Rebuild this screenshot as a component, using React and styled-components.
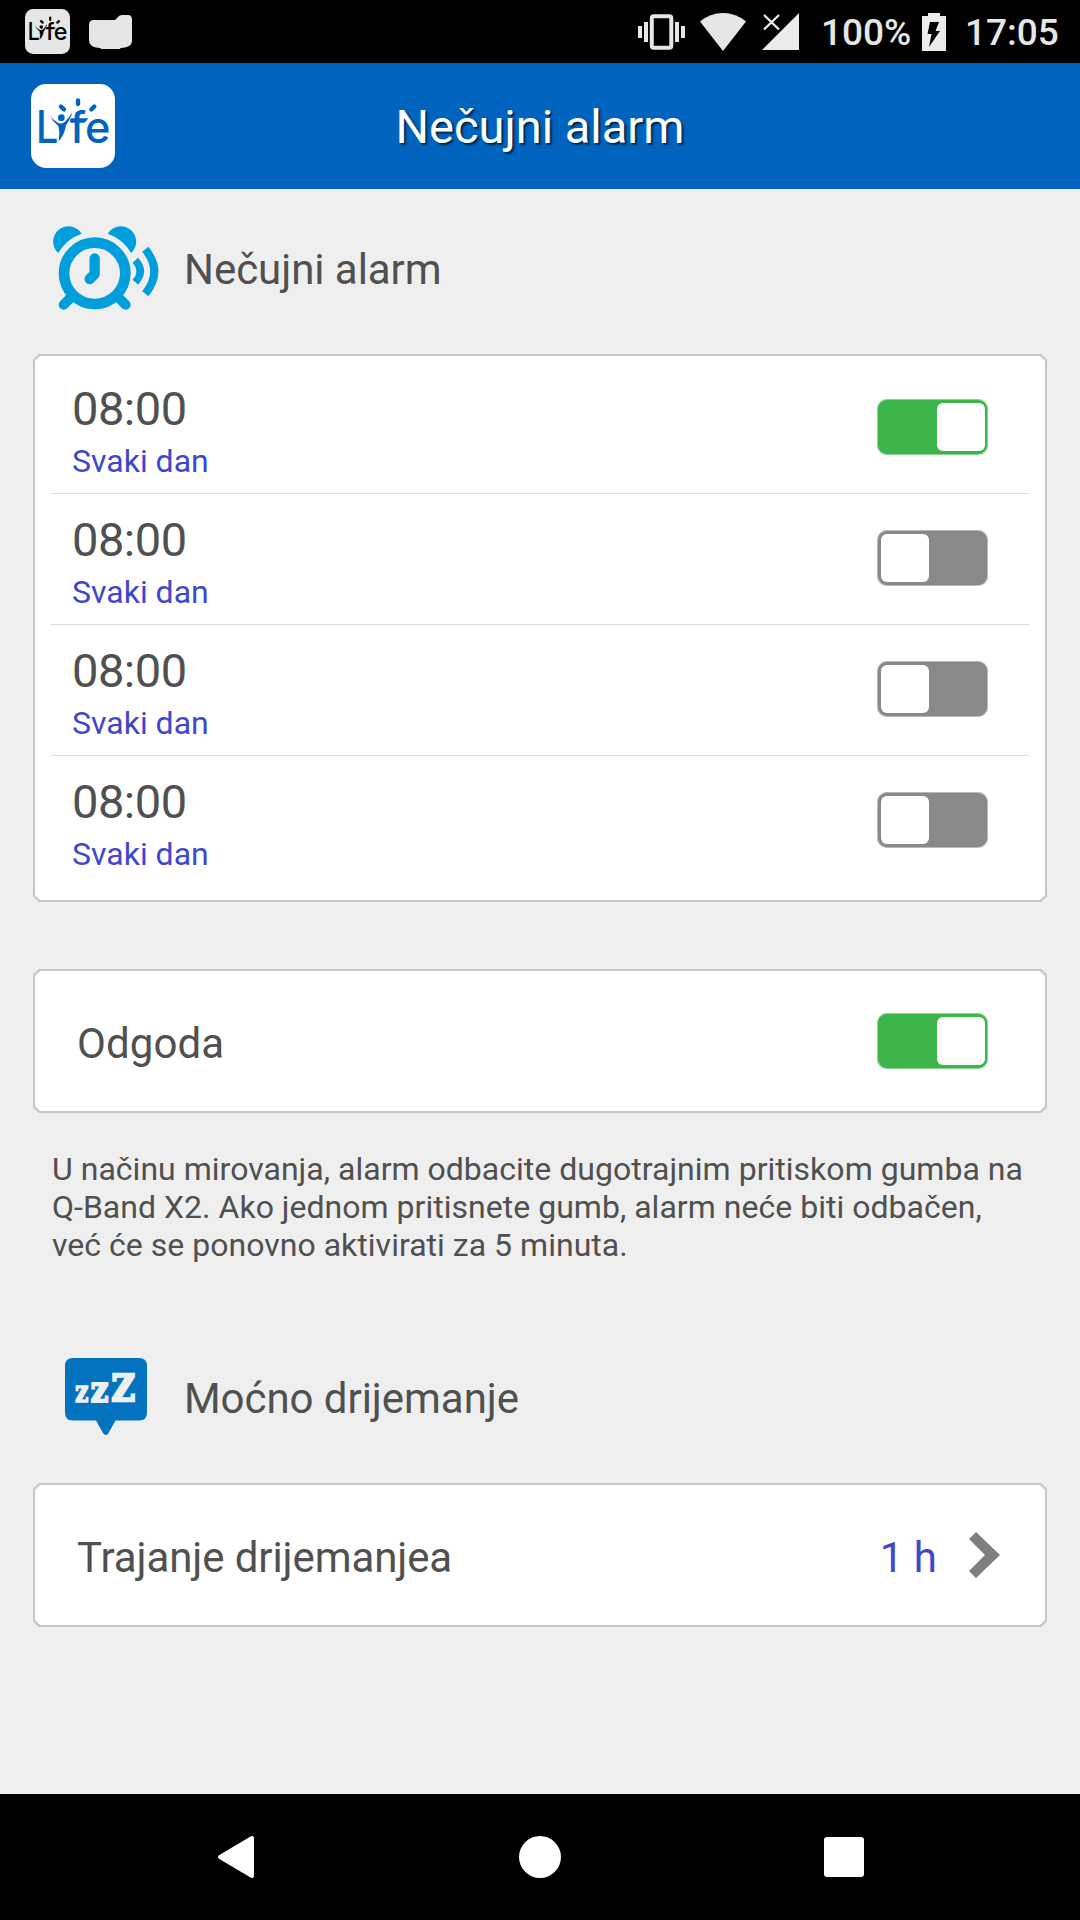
import React, { useState } from 'react';
import styled, { createGlobalStyle } from 'styled-components';

const GlobalStyle = createGlobalStyle`
  * {
    box-sizing: border-box;
  }
  body {
    margin: 0;
    background: #efefef;
    font-family: Roboto, "Noto Sans", sans-serif;
    color: #505050;
  }
`;

const Screen = styled.div`
  width: 1080px;
  height: 1920px;
  display: flex;
  flex-direction: column;
  overflow: hidden;
`;

const StatusBar = styled.div`
  height: 63px;
  padding: 0 21px 0 25px;
  display: flex;
  align-items: center;
  background: #000;
  color: #e6e6e6;
`;

const StatusIcons = styled.div`
  display: flex;
  align-items: center;
  gap: 19px;
  flex: 1;
`;

const StatusText = styled.span`
  font-size: 37px;
  font-weight: 500;
  line-height: 44px;
  padding-top: 3px;
  width: ${(p) => p.$width}px;
  margin-left: ${(p) => p.$gap || 0}px;
  white-space: nowrap;
`;

const StatusSvg = styled.svg`
  display: block;
  flex: none;
  margin-left: ${(p) => p.$gap || 0}px;
`;

const Header = styled.header`
  height: 126px;
  padding: 0 31px;
  display: grid;
  grid-template-columns: 84px 1fr 84px;
  align-items: center;
  background: #0063bd;
`;

const Title = styled.h1`
  margin: 0;
  padding-top: 1px;
  font-size: 47px;
  font-weight: 400;
  line-height: 56px;
  text-align: center;
  color: #fff;
  text-shadow: 2px 2px 2px rgba(0, 0, 0, 0.6);
`;

const Content = styled.main`
  flex: 1;
  padding: 0 33px;
`;

const Section = styled.div`
  display: flex;
  align-items: flex-start;
  height: ${(p) => p.$height}px;
  padding-top: ${(p) => p.$top}px;
`;

const SectionIcon = styled.div`
  width: 151px;
  padding-left: ${(p) => p.$left}px;
  svg {
    display: block;
  }
`;

const SectionTitle = styled.h2`
  margin: ${(p) => p.$top}px 0 0;
  font-size: 42px;
  font-weight: 400;
  line-height: 50px;
  letter-spacing: -0.05px;
`;

const Card = styled.div`
  border: 2px solid #c8c8c8;
  border-radius: 6px;
  corner-shape: bevel;
  background: #fff;
`;

const AlarmCard = styled(Card)`
  height: 548px;
  padding: 7px 16px 0;
`;

const AlarmRow = styled.div`
  height: 131px;
  padding: 18px 41px 0 21px;
  display: flex;
  align-items: flex-start;
  justify-content: space-between;
  border-bottom: 1px solid ${(p) => (p.$last ? 'transparent' : '#dcdcdc')};

  button {
    margin-top: 18px;
  }
`;

const Time = styled.div`
  font-size: 47px;
  line-height: 56px;
  letter-spacing: -0.5px;
`;

const Repeat = styled.div`
  margin-top: 5px;
  font-size: 32px;
  line-height: 38px;
  color: #3f48cc;
`;

const OptionCard = styled(Card)`
  height: 144px;
  margin-top: ${(p) => p.$top || 0}px;
  padding: 0 ${(p) => p.$right}px 0 42px;
  display: flex;
  align-items: center;
`;

const OptionLabel = styled.span`
  flex: 1;
  padding-top: 5px;
  font-size: 42px;
  line-height: 50px;
  letter-spacing: ${(p) => p.$spacing || 0}px;
`;

const OptionValue = styled(OptionLabel)`
  flex: none;
  margin-right: 32px;
  color: #3f48cc;
`;

const Track = styled.button`
  width: 111px;
  height: 56px;
  margin: 0;
  padding: 4px 3px 4px 4px;
  border: none;
  border-radius: 10px;
  display: flex;
  justify-content: ${(p) => (p.$on ? 'flex-end' : 'flex-start')};
  background: ${(p) => (p.$on ? '#3bb54a' : '#898989')};
  box-shadow: inset 0 0 0 1px rgba(255, 255, 255, 0.4);
`;

const Knob = styled.span`
  width: 48px;
  height: 48px;
  border-radius: 6px;
  background: #fff;
`;

const Note = styled.p`
  margin: 37px 0 0;
  padding-left: 19px;
  font-size: 32px;
  line-height: 38px;
  letter-spacing: 0.02px;
  white-space: nowrap;
`;

const NavBar = styled.nav`
  height: 126px;
  padding: 0 216px;
  display: flex;
  align-items: center;
  justify-content: space-between;
  background: #000;
`;

function LyfeLogo({ size, bg, ink }) {
  return (
    <svg width={size} height={size} viewBox="0 0 252 252">
      <rect width="252" height="252" rx="46" fill={bg} />
      <g fill={ink} fontFamily="Inter, sans-serif" fontWeight="500">
        <text x="15" y="176" fontSize="134" textLength="67" lengthAdjust="spacingAndGlyphs">L</text>
        <text x="116" y="176" fontSize="130" textLength="122" lengthAdjust="spacingAndGlyphs">fe</text>
      </g>
      <path d="M118 103 H172 L164 113 H118 Z" fill={ink} />
      <path
        d="M55 90 Q64 106 82 116 Q91 120 100 114 Q112 104 121 87 L124 90 Q116 112 106 124 Q102 154 81 175 Q87 146 81 126 Q62 112 55 90 Z"
        fill={ink}
        stroke={bg}
        strokeWidth="2"
      />
      <circle cx="91" cy="101" r="10" fill={ink} />
      <g stroke={ink} strokeWidth="13" strokeLinecap="round">
        <path d="M90 68 L99 76" />
        <path d="M141 49 V60" />
        <path d="M181 76 L190 68" />
      </g>
    </svg>
  );
}

function AlarmIcon() {
  return (
    <svg width="106" height="84" viewBox="0 0 318 252" fill="none" stroke="#009fdb">
      <circle cx="125" cy="142" r="92" strokeWidth="32" />
      <path d="M125 97 V144 L110 159" strokeWidth="31" strokeLinecap="round" strokeLinejoin="round" />
      <path d="M52 216 L32 236 M198 216 L218 236" strokeWidth="30" strokeLinecap="round" />
      <path d="M16 81 A46 46 0 1 1 86 23 A125 125 0 0 0 16 81 Z" fill="#009fdb" stroke="none" />
      <path d="M234 81 A46 46 0 1 0 164 23 A125 125 0 0 1 234 81 Z" fill="#009fdb" stroke="none" />
      <path d="M247 103 Q277 136 247 169" strokeWidth="22" />
      <path d="M277 70 Q331 137 277 203" strokeWidth="24" />
    </svg>
  );
}

function NapIcon() {
  return (
    <svg width="82" height="78" viewBox="0 0 82 78">
      <path
        d="M8 0 H74 Q82 0 82 8 V54.500 Q82 62.500 74 62.500 H50.500 L43.500 75 Q41 79 38 75 L31 62.500 H8 Q0 62.500 0 54.500 V8 Q0 0 8 0 Z"
        fill="#0373bf"
      />
      <g fill="#efefef" stroke="#efefef" fontFamily="DejaVu Serif, serif" fontWeight="700">
        <text x="10" y="44" fontSize="29" strokeWidth="1.4" textLength="13.500" lengthAdjust="spacingAndGlyphs">z</text>
        <text x="25.500" y="43.700" fontSize="38" strokeWidth="2" textLength="18" lengthAdjust="spacingAndGlyphs">z</text>
        <text x="46.500" y="43.400" fontSize="37.500" strokeWidth="2.600" textLength="23.500" lengthAdjust="spacingAndGlyphs">Z</text>
      </g>
    </svg>
  );
}

function Toggle({ on, onClick }) {
  return (
    <Track type="button" $on={on} onClick={onClick}>
      <Knob />
    </Track>
  );
}

const initialAlarms = [
  { id: 1, time: '08:00', repeat: 'Svaki dan', on: true },
  { id: 2, time: '08:00', repeat: 'Svaki dan', on: false },
  { id: 3, time: '08:00', repeat: 'Svaki dan', on: false },
  { id: 4, time: '08:00', repeat: 'Svaki dan', on: false },
];

export default function App() {
  const [alarms, setAlarms] = useState(initialAlarms);
  const [snooze, setSnooze] = useState(true);

  const toggleAlarm = (id) => {
    setAlarms(alarms.map((a) => (a.id === id ? { ...a, on: !a.on } : a)));
  };

  return (
    <Screen>
      <GlobalStyle />
      <StatusBar>
        <StatusIcons>
          <LyfeLogo size={45} bg="#e6e6e6" ink="#000" />
          <StatusSvg width="43" height="34" viewBox="0 0 43 34" fill="#e6e6e6">
            <path d="M5 5 H25 Q27 5 28 3 Q30 0 33 0 H39 Q43 0 43 5 V26 Q43 31 36 32.500 Q31 32.500 31 34 H12 Q12 32.500 7 32.500 Q0 31 0 25 V10 Q0 5 5 5 Z" />
          </StatusSvg>
        </StatusIcons>
        <StatusSvg width="47" height="36" viewBox="0 0 47 36" fill="#e6e6e6">
          <path d="M0 12 h4 v12 h-4 z M6 8 h4 v20 h-4 z M37 8 h4 v20 h-4 z M43 12 h4 v12 h-4 z" />
          <rect x="13.800" y="2.200" width="19.500" height="31.500" rx="2" fill="none" stroke="#e6e6e6" strokeWidth="4" />
        </StatusSvg>
        <StatusSvg $gap={15} width="46" height="38" viewBox="0 0 46 38" fill="#e6e6e6">
          <path d="M0 8.500 Q10 0 23 0 Q36 0 46 8.500 L23 38 Z" />
        </StatusSvg>
        <StatusSvg $gap={16} width="37" height="37" viewBox="0 0 37 37" fill="#ebebeb">
          <path d="M37 0 V37 H0 Z" />
          <path d="M2 2 L17 16.500 M17 2 L2 16.500" stroke="#ebebeb" strokeWidth="2.400" />
        </StatusSvg>
        <StatusText $gap={22} $width={101}>100%</StatusText>
        <StatusSvg width="24" height="38" viewBox="0 0 24 38">
          <path d="M0 3 H6 V0 H18 V3 H24 V38 H0 Z" fill="#ebebeb" />
          <path d="M8 9 H17 L13.500 18 H18 L7 34 L9.500 21 H5.500 Z" fill="#000" />
        </StatusSvg>
        <StatusText $gap={19} $width={94}>17:05</StatusText>
      </StatusBar>

      <Header>
        <LyfeLogo size={84} bg="#fff" ink="#0063bd" />
        <Title>Nečujni alarm</Title>
      </Header>

      <Content>
        <Section $height={165} $top={37}>
          <SectionIcon $left={20}>
            <AlarmIcon />
          </SectionIcon>
          <SectionTitle $top={19}>Nečujni alarm</SectionTitle>
        </Section>

        <AlarmCard>
          {alarms.map((alarm, i) => (
            <AlarmRow key={alarm.id} $last={i === alarms.length - 1}>
              <div>
                <Time>{alarm.time}</Time>
                <Repeat>{alarm.repeat}</Repeat>
              </div>
              <Toggle on={alarm.on} onClick={() => toggleAlarm(alarm.id)} />
            </AlarmRow>
          ))}
        </AlarmCard>

        <OptionCard $top={67} $right={57}>
          <OptionLabel $spacing={0.1}>Odgoda</OptionLabel>
          <Toggle on={snooze} onClick={() => setSnooze(!snooze)} />
        </OptionCard>

        <Note>
          U načinu mirovanja, alarm odbacite dugotrajnim pritiskom gumba na
          <br />
          Q-Band X2. Ako jednom pritisnete gumb, alarm neće biti odbačen,
          <br />
          već će se ponovno aktivirati za 5 minuta.
        </Note>

        <Section $height={219} $top={94}>
          <SectionIcon $left={32}>
            <NapIcon />
          </SectionIcon>
          <SectionTitle $top={16}>Moćno drijemanje</SectionTitle>
        </Section>

        <OptionCard $right={45}>
          <OptionLabel $spacing={-0.1}>Trajanje drijemanjea</OptionLabel>
          <OptionValue>1 h</OptionValue>
          <svg width="31" height="46" viewBox="0 0 31 46">
            <path d="M7 0 L31 23 L7 46 L0 39 L16 23 L0 7 Z" fill="#7f7f7f" />
          </svg>
        </OptionCard>
      </Content>

      <NavBar>
        <svg width="39" height="44" viewBox="0 0 39 44">
          <path d="M36 3 V41 L4 22 Z" fill="#fff" stroke="#fff" strokeWidth="4" strokeLinejoin="round" />
        </svg>
        <svg width="42" height="42" viewBox="0 0 42 42">
          <circle cx="21" cy="21" r="21" fill="#fff" />
        </svg>
        <svg width="40" height="40" viewBox="0 0 40 40">
          <rect width="40" height="40" rx="3" fill="#fff" />
        </svg>
      </NavBar>
    </Screen>
  );
}
